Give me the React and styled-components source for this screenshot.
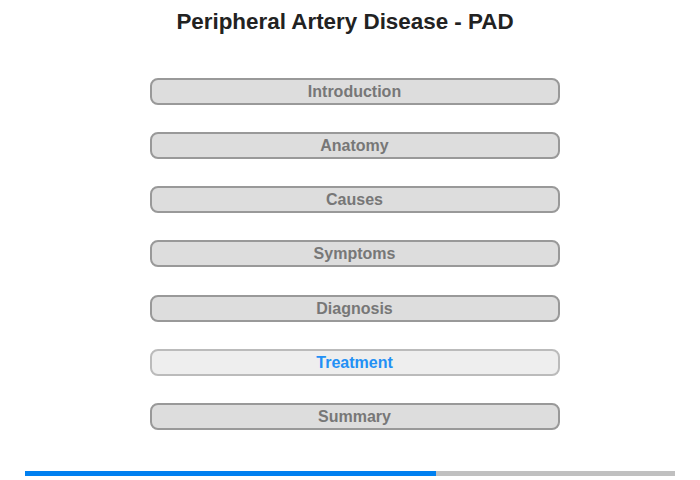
import React from 'react'
import styled, { createGlobalStyle } from 'styled-components'

const GlobalStyle = createGlobalStyle`
  html, body {
    margin: 0;
    padding: 0;
    background: #fff;
  }
  body {
    font-family: "Liberation Sans", Arial, sans-serif;
  }
`

const sections = [
  'Introduction',
  'Anatomy',
  'Causes',
  'Symptoms',
  'Diagnosis',
  'Treatment',
  'Summary'
]

const current = 'Treatment'

export default function App () {
  return <Page>
    <GlobalStyle/>
    <Title>Peripheral Artery Disease - PAD</Title>
    <Menu>
      {sections.map(name => (
        <MenuButton key={name} active={name === current ? 1 : 0}>{name}</MenuButton>
      ))}
    </Menu>
    <Progress>
      <ProgressFill style={{ width: `${(411 / 650) * 100}%` }}/>
    </Progress>
  </Page>
}

const Page = styled.div`
  width: 700px;
  height: 480px;
  display: flex;
  flex-direction: column;
  align-items: center;
  overflow: hidden;
`

const Title = styled.h1`
  margin: 9px 0 0 -10px;
  font-size: 22.4px;
  line-height: 25px;
  font-weight: bold;
  color: #222;
`

const Menu = styled.div`
  margin-top: 44px;
  margin-left: 9px;
  display: flex;
  flex-direction: column;
  gap: 27.17px;
`

const MenuButton = styled.div`
  box-sizing: border-box;
  width: 410px;
  height: 27px;
  padding-top: 1px;
  border: 2px solid ${({ active }) => active ? '#bbb' : '#999'};
  border-radius: 8px;
  background: ${({ active }) => active ? '#eee' : '#ddd'};
  color: ${({ active }) => active ? '#2390f5' : '#777'};
  font-size: 16px;
  font-weight: bold;
  display: flex;
  align-items: center;
  justify-content: center;
  cursor: pointer;
`

const Progress = styled.div`
  margin-top: 41px;
  width: 650px;
  height: 5px;
  background: #c0c0c0;
  display: flex;
`

const ProgressFill = styled.div`
  height: 100%;
  background: #0080f0;
`
